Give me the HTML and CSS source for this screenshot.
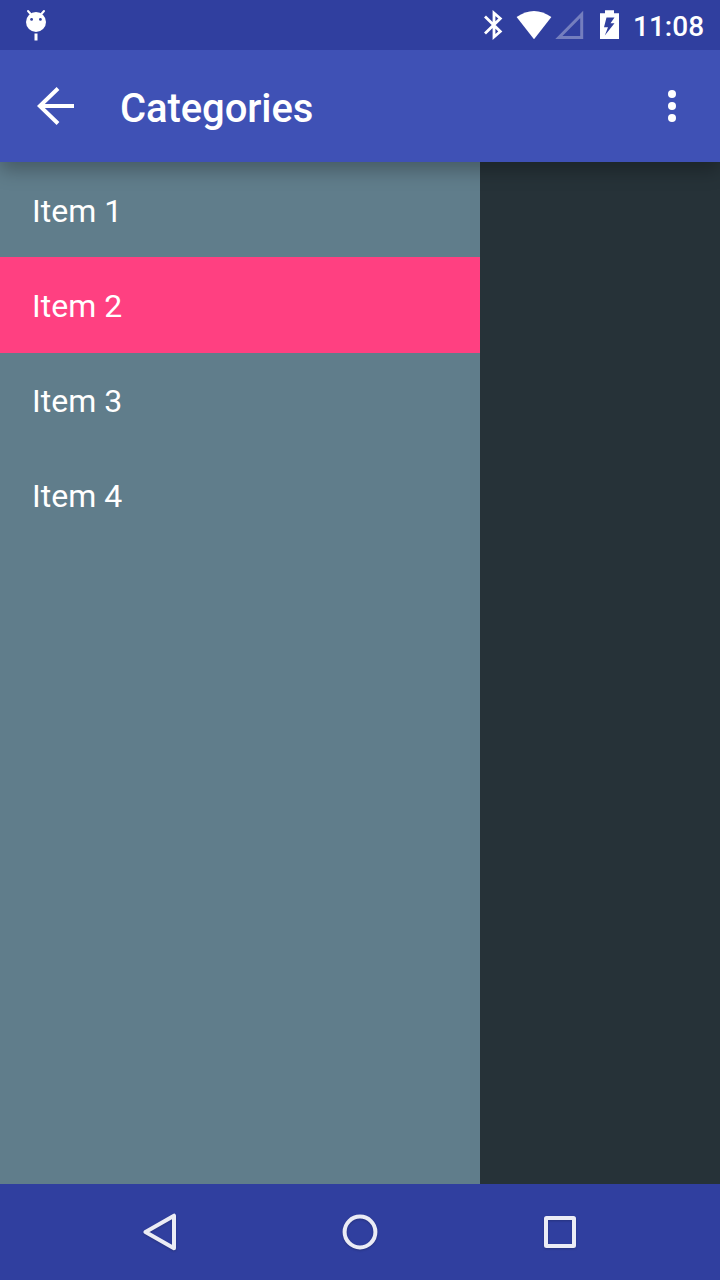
FILE: index.html
```html
<!DOCTYPE html>
<html lang="en">
<head>
<meta charset="utf-8">
<title>Categories</title>
<link rel="stylesheet" href="styles.css">
</head>
<body>
<div class="screen">
  <div class="status-bar">
    <svg class="debug-icon" width="72" height="50" viewBox="0 0 72 50">
      <circle cx="36" cy="22" r="10" fill="#fff"/>
      <path d="M28 11l3.500 4M44 11l-3.500 4" stroke="#fff" stroke-width="2" stroke-linecap="round"/>
      <path d="M36 33.500v7" stroke="#fff" stroke-width="3"/>
      <circle cx="31.600" cy="19.400" r="1.400" fill="#303f9f"/>
      <circle cx="40.400" cy="19.400" r="1.400" fill="#303f9f"/>
    </svg>
    <div class="status-right">
      <svg width="150" height="50" viewBox="480 0 150 50">
        <path d="M485 16.500L500.300 31.500L494 37V13L500.300 18.500L485 33.500" fill="none" stroke="#fff" stroke-width="2.800"/>
        <path d="M516.600 17Q534 4.800 551.400 17L534 39.300z" fill="#fff"/>
        <path d="M581.700 14.500V37.500H558.900z" fill="none" stroke="#fff" stroke-opacity=".33" stroke-width="3"/>
        <path fill-rule="evenodd" d="M605 10.300h9v3h5V39h-19V13.300h5zM606.500 17.500L604 27.200H608L604.800 35.500L614.500 23.300H610.500L614.500 17.500z" fill="#fff"/>
      </svg>
      <span class="clock">11:08</span>
    </div>
  </div>
  <header class="app-bar">
    <svg class="back" width="38" height="40" viewBox="0 0 38 40">
      <path d="M37 20H3M21 2.500L2.800 20L21 37.500" fill="none" stroke="#fff" stroke-width="4"/>
    </svg>
    <h1 class="title">Categories</h1>
    <svg class="more" width="8" height="32" viewBox="0 0 8 32" fill="#fff">
      <circle cx="4" cy="4" r="4"/><circle cx="4" cy="16" r="4"/><circle cx="4" cy="28" r="4"/>
    </svg>
  </header>
  <main class="content">
    <ul class="drawer">
      <li class="item">Item 1</li>
      <li class="item selected">Item 2</li>
      <li class="item">Item 3</li>
      <li class="item">Item 4</li>
    </ul>
  </main>
  <nav class="nav-bar">
    <svg width="40" height="40" viewBox="0 0 40 40"><path d="M34 3.700V36.300L5.500 20z"/></svg>
    <svg width="40" height="40" viewBox="0 0 40 40"><circle cx="20" cy="20" r="15.400"/></svg>
    <svg width="40" height="40" viewBox="0 0 40 40"><rect x="6" y="6" width="28" height="28" rx=".5"/></svg>
  </nav>
</div>
</body>
</html>
```
FILE: styles.css
```css
body {
  margin: 0;
  font-family: Roboto, "Liberation Sans", sans-serif;
  color: #fff;
}

.screen {
  display: flex;
  flex-direction: column;
  width: 720px;
  height: 1280px;
  overflow: hidden;
}

.status-bar {
  position: relative;
  z-index: 2;
  display: flex;
  justify-content: space-between;
  height: 50px;
  background: #303f9f;
}

.status-right {
  display: flex;
  width: 240px;
}

.clock {
  margin-left: 3px;
  font-size: 28px;
  font-weight: 500;
  line-height: 53px;
}

.app-bar {
  position: relative;
  z-index: 1;
  display: flex;
  align-items: center;
  box-sizing: border-box;
  height: 112px;
  padding: 0 44px 0 37px;
  background: #3f51b5;
  box-shadow: 0 8px 18px rgba(0, 0, 0, 0.28);
}

.title {
  flex: 1;
  margin: 6px 0 0 45px;
  font-size: 40px;
  font-weight: 500;
  line-height: 48px;
  letter-spacing: -0.08px;
}

.content {
  flex: 1;
  background: #263238;
}

.drawer {
  box-sizing: border-box;
  width: 480px;
  height: 100%;
  margin: 0;
  padding: 0;
  list-style: none;
  background: #607d8b;
}

.item {
  height: 95px;
  padding-left: 32px;
  font-size: 32px;
  line-height: 99px;
}

.selected {
  height: 96px;
  margin-bottom: -1px;
  background: #ff4081;
}

.nav-bar {
  display: flex;
  justify-content: center;
  align-items: center;
  gap: 160px;
  height: 96px;
  background: #303f9f;
}

.nav-bar svg {
  fill: none;
  stroke: #ebecf5;
  stroke-width: 4;
  stroke-linejoin: round;
  filter: drop-shadow(0 1px 1px rgba(0, 0, 0, 0.2));
}
```
